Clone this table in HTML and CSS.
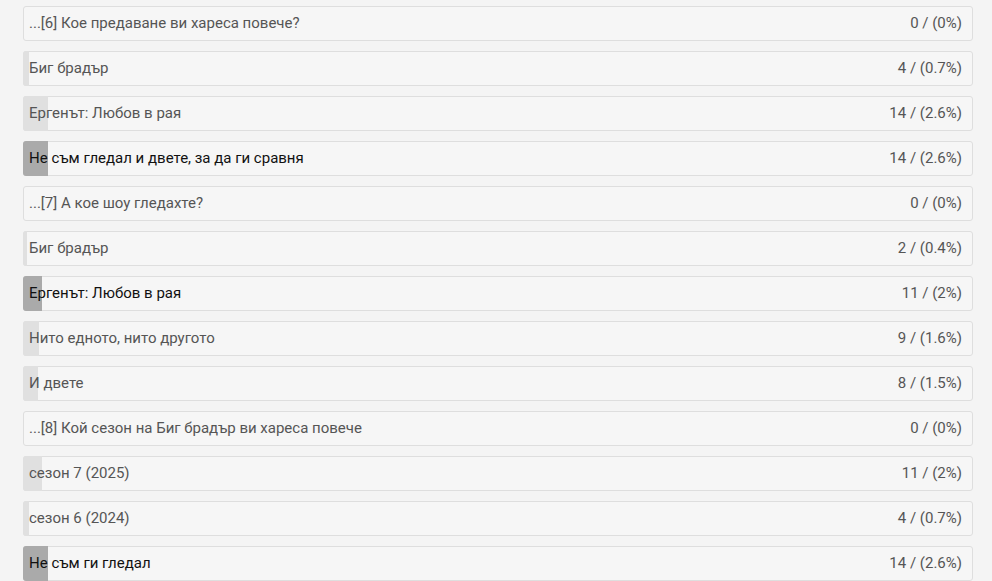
FILE: index.html
```html
<!DOCTYPE html>
<html lang="bg">
<head>
<meta charset="utf-8">
<title>Резултати</title>
<link rel="stylesheet" href="styles.css">
</head>
<body>
<div class="list">
  <div class="row q"><span class="label">...[6] Кое предаване ви хареса повече?</span><span class="count">0 / (0%)</span></div>
  <div class="row"><div class="bar" style="width:6px"></div><span class="label">Биг брадър</span><span class="count">4 / (0.7%)</span></div>
  <div class="row"><div class="bar" style="width:25px"></div><span class="label">Ергенът: Любов в рая</span><span class="count">14 / (2.6%)</span></div>
  <div class="row top"><div class="bar" style="width:25px"></div><span class="label">Не съм гледал и двете, за да ги сравня</span><span class="count">14 / (2.6%)</span></div>
  <div class="row q"><span class="label">...[7] А кое шоу гледахте?</span><span class="count">0 / (0%)</span></div>
  <div class="row"><div class="bar" style="width:4px"></div><span class="label">Биг брадър</span><span class="count">2 / (0.4%)</span></div>
  <div class="row top"><div class="bar" style="width:19px"></div><span class="label">Ергенът: Любов в рая</span><span class="count">11 / (2%)</span></div>
  <div class="row"><div class="bar" style="width:16px"></div><span class="label">Нито едното, нито другото</span><span class="count">9 / (1.6%)</span></div>
  <div class="row"><div class="bar" style="width:15px"></div><span class="label">И двете</span><span class="count">8 / (1.5%)</span></div>
  <div class="row q"><span class="label">...[8] Кой сезон на Биг брадър ви хареса повече</span><span class="count">0 / (0%)</span></div>
  <div class="row"><div class="bar" style="width:19px"></div><span class="label">сезон 7 (2025)</span><span class="count">11 / (2%)</span></div>
  <div class="row"><div class="bar" style="width:6px"></div><span class="label">сезон 6 (2024)</span><span class="count">4 / (0.7%)</span></div>
  <div class="row top"><div class="bar" style="width:25px"></div><span class="label">Не съм ги гледал</span><span class="count">14 / (2.6%)</span></div>
</div>
</body>
</html>
```
FILE: styles.css
```css
html, body {
  margin: 0;
  padding: 0;
  background: #f4f4f4;
  font-family: Roboto, "Liberation Sans", Arial, sans-serif;
}
.list {
  padding: 6px 19px 0 23px;
  display: flex;
  flex-direction: column;
  gap: 10px;
}
.row {
  position: relative;
  height: 35px;
  box-sizing: border-box;
  border: 1px solid #dedede;
  border-radius: 3px;
  background: #f6f6f6;
  display: flex;
  align-items: center;
  justify-content: space-between;
  padding: 0 10px 1px 5px;
  font-size: 15px;
  color: #555;
}
.bar {
  position: absolute;
  left: -1px;
  top: -1px;
  bottom: -1px;
  background: #e0e0e0;
  border-radius: 3px 0 0 3px;
}
.row.top { color: #111; }
.row.top .bar { background: #aaaaaa; }
.label, .count { position: relative; }
.count { color: #555; }
```
